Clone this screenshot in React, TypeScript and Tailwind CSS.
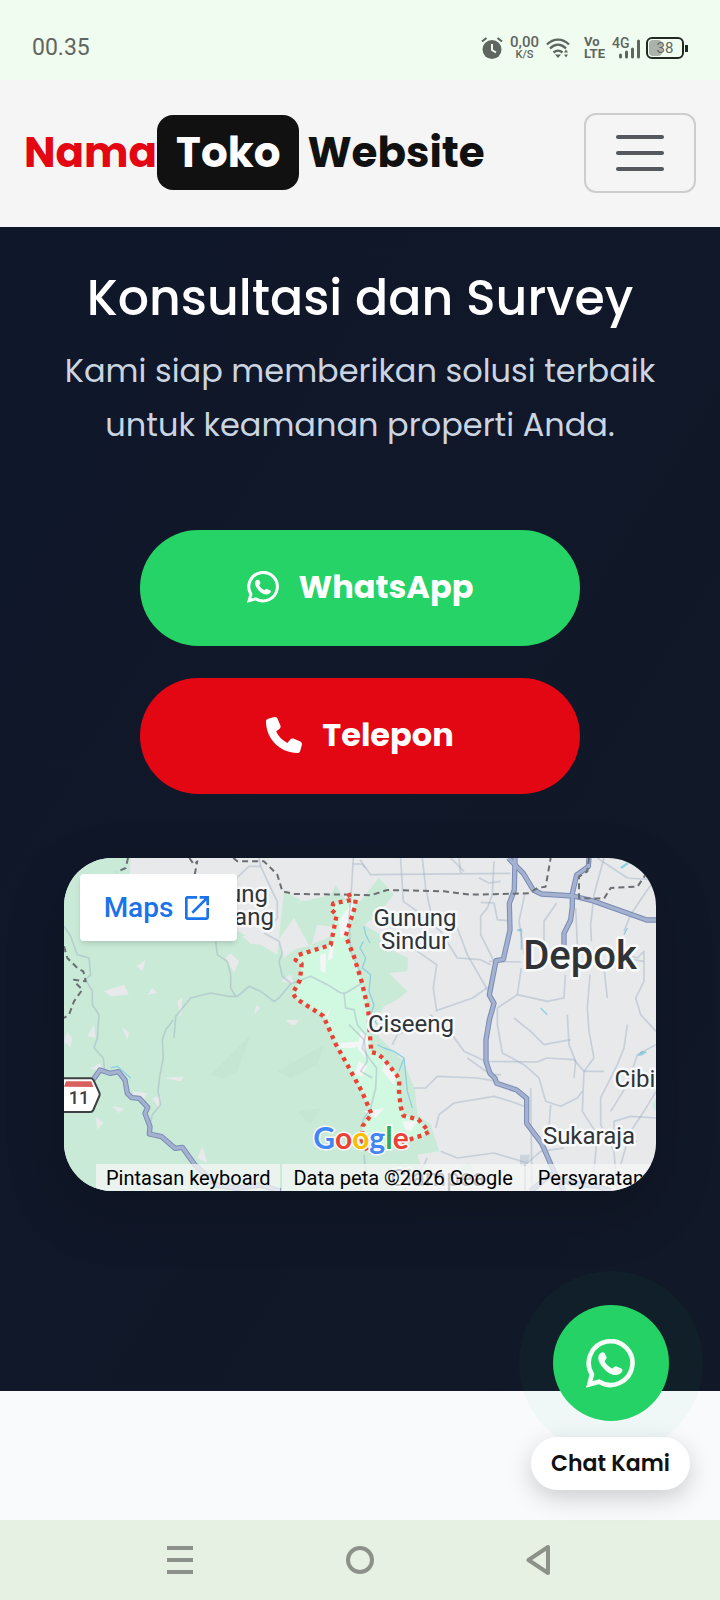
import { FaPhone } from 'react-icons/fa6';

const greenPatches = [
  'M0 0H200L196 60L300 90L540 230L640 290L650 190L660 100L720 130L800 110L815 82L840 120L888 130L945 60L990 110L930 180L900 200L950 230L990 280L1032 300L1030 340L975 345L1030 400L1000 425L960 445L928 506L948 540L1018 610L1053 695L1060 770L1100 800L1126 880L1060 890L1080 950L1030 920L1030 999H0Z',
  'M1190 930L1215 915L1240 960L1200 970Z',
  'M1776 720L1764 745L1776 760Z',
];

const grayPatches = [
  'M640 250L690 180L740 270L760 200L830 210L790 240L730 265L690 275L660 300Z',
  'M120 400L180 380L195 410L140 415Z',
  'M218 325L244 305L236 340Z',
  'M250 410L265 390L280 405Z',
  'M485 300L500 285L525 310L510 345Z',
  'M535 235L600 225L590 260L560 258Z',
  'M650 370L680 350L690 378Z',
  'M10 520L24 540L20 570L0 550Z',
  'M70 535L90 500L95 540Z',
  'M172 505L195 525L190 545Z',
  'M665 486H705L695 500H680Z',
  'M300 660L360 655L350 670Z',
  'M205 700L250 705L240 725L210 715Z',
  'M145 745L180 750L165 765Z',
  'M95 775L118 795L100 815Z',
  'M265 720L290 715L285 750Z',
  'M400 900L415 865L430 915Z',
  'M78 632L110 615L112 640Z',
  'M340 430L350 480L355 420Z',
  'M735 80L700 140L720 120Z',
  'M570 470L578 440L588 450Z',
  'M310 30L330 10L340 60Z',
];

const regionPath =
  'M853 106L863 126L808 136L803 156L818 171L813 196L800 261L703 291L695 306L713 318L708 366L686 406L698 423L778 474L815 558L853 626L894 701L923 769L896 804L893 846L913 884L1038 844L1078 831L1095 821L1063 784L1018 773L1010 746L1005 701L1006 666L998 651L958 601L938 586L922 583L918 534L913 461L906 426L893 371L870 296L845 234L873 146L876 111';

const regionPatches = [
  'M845 160L870 130L850 230L830 240L825 190Z',
  'M798 265L812 235L806 300L790 310Z',
  'M768 290L785 285L785 345L770 340Z',
  'M890 520L915 540L905 600L880 570Z',
  'M815 556L905 550L870 570L830 570Z',
  'M885 610L910 625L895 655L870 650Z',
  'M960 610L995 650L990 680L955 640Z',
  'M900 760L960 750L935 780Z',
  'M1015 790L1060 790L1040 820L1025 815Z',
  'M785 470L800 450L790 480Z',
];

const minorRoads = [
  'M0 205L20 235L40 290L75 300L80 350L65 365L85 400L85 440L105 470L100 540L90 570L118 600L122 640',
  'M330 540L335 475L380 420L440 405L495 415L520 415L555 385L590 400L630 430L645 420L680 378L740 355L790 380L830 405L845 405L895 375',
  'M455 250L460 290L490 310L500 350L500 390L515 415',
  'M600 225L645 250L655 285L645 310L655 355L680 375',
  'M518 60L555 25L590 25L625 100L640 130L640 180L610 215',
  'M585 0L590 25',
  'M328 486L305 515L295 545L298 600L288 650L282 700L290 740L265 770L258 800',
  'M868 0L862 100L855 180L860 280L890 345',
  'M866 18L892 18L905 30',
  'M840 405L845 450L870 455L880 500L905 530L895 570L915 600L938 630L935 690L920 750L895 790',
  'M855 500L900 545L910 610L890 640L925 660',
  'M888 5L920 50L1340 46',
  'M1010 0L1018 130L1060 160L1130 220L1180 300L1250 305L1280 320',
  'M1075 0L1085 90L1100 160L1180 210L1210 290L1250 360L1290 430',
  'M1185 0L1190 45',
  'M1160 0L1200 40',
  'M1290 10L1285 110L1270 150L1250 175L1250 230L1290 310',
  'M1245 60L1275 75L1310 70',
  'M1250 133L1290 135L1300 185L1330 188',
  'M1060 280L1118 320L1108 390L1118 460',
  'M1116 458L1226 420L1276 385',
  'M1098 470L1150 510L1200 580L1265 610L1420 612L1448 600L1530 605L1560 640L1620 640',
  'M1276 310L1370 312',
  'M1382 110L1365 190L1380 290',
  'M1478 135L1440 190L1440 260L1460 300',
  'M1535 150L1540 260L1620 330L1630 420',
  'M1620 0L1590 110L1580 200L1582 250',
  'M1776 60L1740 110L1700 170L1680 220',
  'M1600 0L1690 60L1776 66',
  'M1372 330L1360 410L1450 430L1500 420L1504 350',
  'M1360 410L1300 450L1300 500L1315 585L1380 620',
  'M1380 620L1425 660L1445 730L1490 745L1540 720L1555 700',
  'M1460 740L1455 810L1450 850',
  'M1690 290L1720 300L1740 280L1740 370L1715 420L1730 470L1776 520',
  'M1620 330L1680 300L1740 310',
  'M1578 350L1570 450L1575 520L1590 600L1560 640L1555 760L1600 830L1590 940',
  'M1510 470L1515 560L1535 610L1530 660',
  'M1690 500L1680 570L1660 620L1610 720L1610 800L1650 880L1660 999',
  'M1776 560L1720 590L1690 680L1640 760',
  'M1776 700L1740 760L1700 820L1670 920',
  'M1050 690L1085 690L1120 655L1240 660L1300 670',
  'M1115 810L1125 770L1170 735L1290 715L1340 730L1380 745',
  'M1130 880L1180 900L1290 885L1390 915L1430 880L1500 870',
  'M888 999L905 940L900 890',
  'M985 560L1000 530L1080 490',
  'M1400 690L1404 999',
  'M1210 600L1280 650L1310 650',
  'M1350 480L1400 520L1440 560L1520 545',
  'M1776 780L1700 775L1650 790L1650 850L1720 850',
  'M1090 900L1060 960L1020 999',
];

const rivers = [
  'M898 250L888 270L905 300L895 330L920 350L915 400L930 440L920 470L940 500',
  'M918 255L905 230L900 205',
  'M1005 640L1020 600L990 580L960 570L940 560',
  'M1020 600L1025 650L1030 700L1045 750',
  'M1360 216L1372 214L1372 275',
  'M140 630L160 625L200 660',
  'M1430 450L1450 470',
  'M1690 210L1680 230',
];

const borders = [
  'M376 0L390 20L400 10L392 50M508 0L520 10L600 10L640 50L655 100L690 108L860 110L920 112L970 96L1140 100L1220 110L1395 106L1420 90L1445 86L1460 0',
  'M1575 0L1570 40L1545 56L1545 120L1620 122L1640 90L1720 86L1745 50',
  'M0 265L10 300L40 330L58 340L65 370L30 365L35 375L55 395L30 430L15 470L0 480',
  'M192 0L185 30L158 42',
];

const majorRoads = [
  'M1353 0L1351 96L1336 136L1338 216L1318 304L1296 308L1276 411L1290 436L1276 486L1266 546L1266 611L1278 646L1293 661L1298 676L1358 696L1388 721L1388 796L1433 856L1468 936L1500 999',
  'M1333 0L1378 46L1408 96L1433 108L1528 114L1588 129L1748 186L1776 186',
  'M1575 0L1573 26L1538 51L1525 106L1525 146L1520 186L1500 226L1500 262',
  'M88 664L108 636L138 646L163 641L183 666L190 706L203 719L226 721L251 748L243 766L258 806L256 828L293 836L333 871L355 868L393 921L458 981L518 991L588 981L650 999',
  'M1400 999L1460 950L1520 975L1600 985L1640 999',
];

const mapLabels = [
  { text: 'ung', x: 184, y: 44 },
  { text: 'ang', x: 190, y: 67 },
  { text: 'Gunung', x: 351, y: 68 },
  { text: 'Sindur', x: 351, y: 91 },
  { text: 'Ciseeng', x: 347, y: 174 },
  { text: 'Cibi', x: 571, y: 229 },
  { text: 'Sukaraja', x: 525, y: 286 },
  { text: 'Ciampea', x: 374, y: 328 },
];

function WhatsAppIcon({ className }: { className: string }) {
  return (
    <svg viewBox="0 0 148 148" className={className} aria-hidden="true">
      <path
        d="M40 129L10 137L18 107A66 66 0 1 1 40 129Z"
        fill="none"
        stroke="currentColor"
        strokeWidth="14"
        strokeLinejoin="miter"
      />
      <path
        d="M44 42Q50 38 56 42L62 54Q63 58 60 61L56 67Q64 82 80 89L86 84Q90 81 94 84L107 89Q112 92 110 97Q105 108 92 109Q72 110 54 90Q36 70 37 56Q37 47 44 42Z"
        fill="currentColor"
      />
    </svg>
  );
}

function StatusBar() {
  return (
    <div className="flex h-20 items-center justify-between bg-[#f1fcf0] px-8 pt-4 font-[Roboto,sans-serif] text-[#5f665f]">
      <span className="text-[23px] leading-6">00.35</span>
      <div className="flex items-center">
        <svg viewBox="0 0 22 22" className="size-[22px]" fill="none" stroke="currentColor">
          <circle cx="11" cy="12.5" r="9.5" fill="currentColor" stroke="none" />
          <path d="M1 4.5L5.5 1M21 4.5L16.5 1" strokeWidth="2.2" />
          <path d="M11 7v6l4 2.5" stroke="#f1fcf0" strokeWidth="2" />
        </svg>
        <div className="ml-[7px] flex flex-col items-center font-medium">
          <span className="text-[15px] leading-[13px]">0,00</span>
          <span className="text-[11px] leading-3">K/S</span>
        </div>
        <svg viewBox="0 0 24 22" className="ml-[7px] h-[22px] w-6" fill="none" stroke="currentColor" strokeWidth="2.4">
          <path d="M1 7.5C7.5 1 16.5 1 23 7.5M4 11.5C9 6.5 15 6.5 20 11.5M7.5 15.5C10.5 13 13.5 13 16.5 15.5" />
          <path d="M9 17.5h6L12 21zM18 15.5l2-3 2 3zM18 17.500l2 3 2-3z" fill="currentColor" stroke="none" />
        </svg>
        <div className="ml-[14px] flex flex-col items-start text-[13px] font-bold leading-3">
          <span>Vo</span>
          <span>LTE</span>
        </div>
        <div className="relative ml-[7px] h-6 w-7">
          <span className="absolute left-0 top-0 text-sm font-medium leading-[14px]">4G</span>
          <svg viewBox="0 0 28 24" className="h-6 w-7" stroke="currentColor" strokeWidth="3" strokeLinecap="round">
            <path d="M8.5 19v2M14.5 16v5M20.5 13v8M26.5 5v16" />
          </svg>
        </div>
        <div className="ml-[6px] flex items-center">
          <div className="relative h-[22px] w-[38px] rounded-md border-2 border-[#222822]">
            <div className="absolute left-px top-px h-4 w-[13px] rounded-sm bg-[#aab3a9]" />
            <span className="absolute inset-0 text-center text-[15px] leading-[18px]">38</span>
          </div>
          <div className="ml-px h-[7px] w-[3px] bg-[#222822]" />
        </div>
      </div>
    </div>
  );
}

function Navbar() {
  return (
    <nav className="flex h-[147px] items-center justify-between bg-[#f5f5f5] px-6 pb-[2px]">
      <a href="#" className="flex items-center whitespace-nowrap text-[42px] font-bold leading-[63px] text-[#111111]">
        <span className="text-[#e30613]">Nama</span>
        <span className="rounded-2xl bg-[#111111] px-[19px] py-[6px] text-white">Toko</span>
        <span className="ml-2">Website</span>
      </a>
      <button
        type="button"
        aria-label="Menu"
        className="flex h-20 w-28 flex-col items-center justify-center gap-3 rounded-xl border-2 border-[#cdcdcd]"
      >
        <span className="h-1 w-12 rounded-full bg-[#55585c]" />
        <span className="h-1 w-12 rounded-full bg-[#55585c]" />
        <span className="h-1 w-12 rounded-full bg-[#55585c]" />
      </button>
    </nav>
  );
}

function MapCard() {
  return (
    <div className="relative mt-16 h-[333px] w-full overflow-hidden rounded-[48px] bg-[#e7e9eb] shadow-[0_20px_60px_rgba(0,0,0,0.2)]">
      <svg viewBox="0 0 592 333" preserveAspectRatio="xMidYMid slice" className="size-full">
        <g transform="scale(0.33333)" fill="none" strokeLinejoin="round">
          {greenPatches.map((d) => <path key={d} d={d} fill="#c9ead7" />)}
          <path d="M440 650L560 530L520 640L480 660ZM640 640L780 560L760 620L680 660ZM700 760L770 750L740 800Z" fill="#c4e6d2" />
          {grayPatches.map((d) => <path key={d} d={d} fill="#e7e9eb" />)}
          <path d={`${regionPath}Z`} fill="#d1f8e0" />
          {regionPatches.map((d) => <path key={d} d={d} fill="#f4f6f6" />)}
          <path d="M1368 890H1398L1390 925H1368Z" fill="#cbd3dc" />
          <path d="M1668 28L1690 12L1694 18L1674 32ZM1720 595L1732 578L1750 582L1735 592ZM1360 218L1372 210L1376 222Z" fill="#8fd0e2" />
          {rivers.map((d) => <path key={d} d={d} stroke="#90cfe2" strokeWidth="4" />)}
          {minorRoads.map((d) => <path key={d} d={d} stroke="#9fb0c4" strokeOpacity="0.45" strokeWidth="5" />)}
          {majorRoads.map((d) => <path key={d} d={d} stroke="#7a8bb5" strokeWidth="16" />)}
          {majorRoads.map((d) => <path key={d} d={d} stroke="#a4b2d0" strokeWidth="10" />)}
          {borders.map((d) => <path key={d} d={d} stroke="#6b6e72" strokeWidth="6" strokeDasharray="18 12" />)}
          <path d={regionPath} stroke="#ea4335" strokeWidth="13" strokeDasharray="12 13" />
          <path d="M-20 661H80Q86 661 89 667L106 704Q108 710 106 714L88 756Q85 762 79 762H-20Z" fill="#fff" stroke="#3c4043" strokeWidth="6" />
          <path d="M0 686L6 670H82L88 687Z" fill="#d9605f" />
        </g>
        <text x="15" y="246" textAnchor="middle" fill="#3c4043" className="font-[Roboto,sans-serif] text-[18px] font-medium">11</text>
        <g
          textAnchor="middle"
          fill="#303336"
          stroke="#f7f9fa"
          strokeWidth="5"
          strokeLinejoin="round"
          paintOrder="stroke"
          className="font-[Roboto,sans-serif]"
        >
          {mapLabels.map((label) => (
            <text key={label.text} x={label.x} y={label.y} className="text-[24px]">{label.text}</text>
          ))}
          <text x="516" y="111" className="text-[40px] font-medium">Depok</text>
        </g>
        <text
          x="297"
          y="291"
          textAnchor="middle"
          stroke="#f7f9fa"
          strokeWidth="3"
          paintOrder="stroke"
          className="font-[Lato,sans-serif] text-[30px] font-bold"
        >
          <tspan fill="#4285f4">G</tspan>
          <tspan fill="#ea4335">o</tspan>
          <tspan fill="#fbbc04">o</tspan>
          <tspan fill="#4285f4">g</tspan>
          <tspan fill="#34a853">l</tspan>
          <tspan fill="#ea4335">e</tspan>
        </text>
      </svg>
      <a
        href="#"
        className="absolute left-4 top-4 flex h-[67px] w-[157px] items-center justify-center gap-2 rounded bg-white font-[Roboto,sans-serif] text-[28px] font-medium text-[#1a73e8] shadow-md"
      >
        Maps
        <svg viewBox="0 0 24 24" className="size-8" fill="currentColor">
          <path d="M19 19H5V5h7V3H5a2 2 0 0 0-2 2v14a2 2 0 0 0 2 2h14c1.1 0 2-.9 2-2v-7h-2v7zM14 3v2h3.590l-9.830 9.830 1.410 1.410L19 6.410V10h2V3h-7z" />
        </svg>
      </a>
      <div className="absolute bottom-0 left-8 right-0 flex gap-[2px] overflow-hidden whitespace-nowrap font-[Roboto,sans-serif] text-[20px] leading-[25px] text-black">
        <button type="button" className="bg-[#f5f5f5]/75 px-[10px] pt-[2px]">Pintasan keyboard</button>
        <span className="bg-[#f5f5f5]/75 px-[11px] pt-[2px]">Data peta ©2026 Google</span>
        <a href="#" className="grow bg-[#f5f5f5]/75 px-[11px] pt-[2px]">Persyaratan</a>
      </div>
    </div>
  );
}

function FloatingChat() {
  return (
    <a href="#" className="absolute bottom-[110px] right-[30px] flex flex-col items-center gap-4">
      <span className="relative flex size-[116px] items-center justify-center rounded-full bg-[#25d366] text-white">
        <span className="absolute -inset-[34px] rounded-full bg-[#25d366]/4" />
        <WhatsAppIcon className="size-[49px]" />
      </span>
      <span className="relative flex h-[53px] w-[159px] items-center justify-center rounded-full bg-white text-[22px] font-semibold text-[#111111] shadow-[0_8px_24px_rgba(0,0,0,0.18)]">
        Chat Kami
      </span>
    </a>
  );
}

function SystemNav() {
  return (
    <div className="grid h-20 grid-cols-3 items-center justify-items-center bg-[#e6f0e3] px-[90px] text-[#8c918a]">
      <button type="button" aria-label="Recent">
        <svg viewBox="0 0 28 28" className="size-7" stroke="currentColor" strokeWidth="4">
          <path d="M1 2h26M1 14h26M1 26h26" />
        </svg>
      </button>
      <button type="button" aria-label="Home">
        <svg viewBox="0 0 28 28" className="size-7" fill="none" stroke="currentColor" strokeWidth="4">
          <circle cx="14" cy="14" r="12" />
        </svg>
      </button>
      <button type="button" aria-label="Back">
        <svg viewBox="0 0 28 30" className="h-[30px] w-7" fill="none" stroke="currentColor" strokeWidth="4" strokeLinejoin="round">
          <path d="M22 2v26L2.5 15z" />
        </svg>
      </button>
    </div>
  );
}

export default function App() {
  return (
    <div className="relative flex min-h-screen flex-col overflow-hidden bg-[#f8fafc] font-[Poppins,Inter,sans-serif]">
      <StatusBar />
      <Navbar />

      <main className="flex flex-1 flex-col">
        <section className="flex flex-col items-center bg-gradient-to-br from-[#0f172a] to-[#111827] px-16 pb-[200px] pt-[42px] text-center">
          <h2 className="whitespace-nowrap text-[49px] font-medium leading-[59px] text-white">Konsultasi dan Survey</h2>
          <p className="mt-4 text-[32px] leading-[54px] text-[#cbd5e1]">
            Kami siap memberikan solusi terbaik untuk keamanan properti Anda.
          </p>

          <div className="mt-[78px] flex w-full max-w-[440px] flex-col gap-8 text-[32px] font-bold text-white">
            <a href="#" className="flex h-[116px] items-center justify-center gap-5 rounded-full bg-[#25d366] pb-[2px]">
              <WhatsAppIcon className="size-8" />
              WhatsApp
            </a>
            <a href="#" className="flex h-[116px] items-center justify-center gap-5 rounded-full bg-[#e30613] pb-[2px]">
              <FaPhone className="size-9" />
              Telepon
            </a>
          </div>

          <MapCard />
        </section>

        <div className="min-h-[129px] flex-1" />
      </main>

      <SystemNav />
      <FloatingChat />
    </div>
  );
}
